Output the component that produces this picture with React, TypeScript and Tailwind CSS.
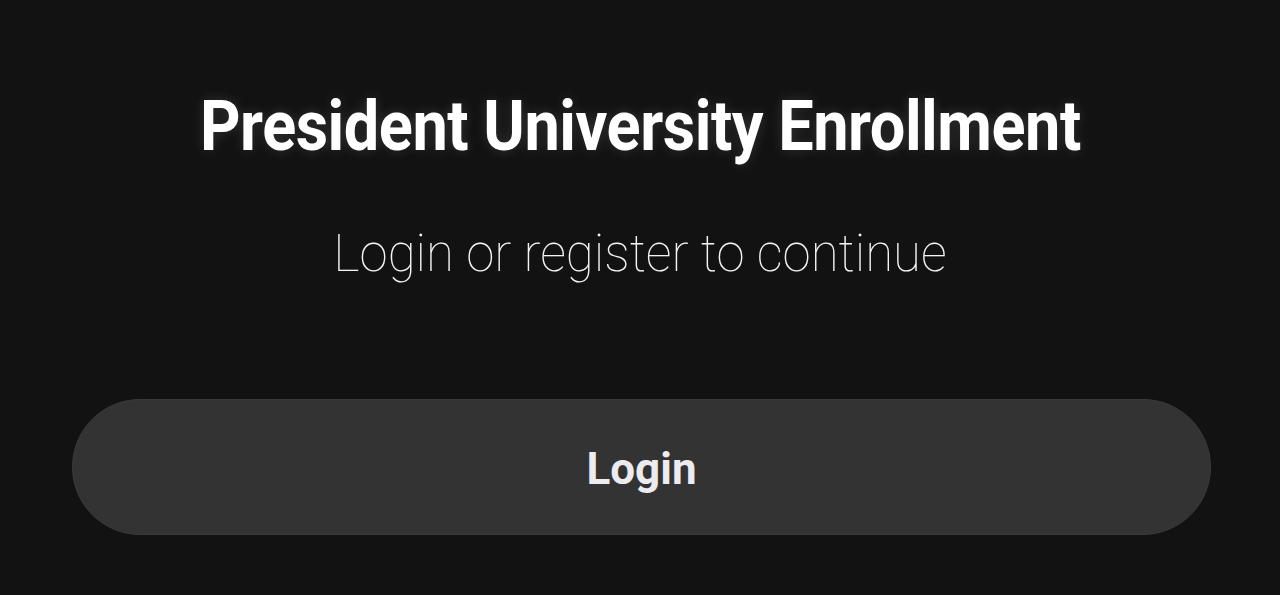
export default function App() {
  return (
    <div className="w-full h-[595px] bg-[#121212] flex flex-col items-center font-['Roboto',sans-serif] overflow-hidden">
      {/* Heading */}
      <h1 className="mt-[88px] text-[70px] leading-[76px] font-bold text-white tracking-[-0.5px] scale-x-[0.9] whitespace-nowrap [text-shadow:0_0_14px_rgba(255,255,255,0.14)]">
        President University Enrollment
      </h1>
      <p className="mt-[60px] text-[51px] leading-[60px] font-thin text-[#f4f4f4] whitespace-nowrap">
        Login or register to continue
      </p>

      {/* Action */}
      <div className="w-full pl-[72px] pr-[69px] mt-[115px]">
        <button className="w-full h-[136px] pt-[3px] rounded-full bg-[#333333] border border-[#3a3a3a] text-[#ebebf0] text-[44px] font-bold flex items-center justify-center">
          Login
        </button>
      </div>
    </div>
  );
}
